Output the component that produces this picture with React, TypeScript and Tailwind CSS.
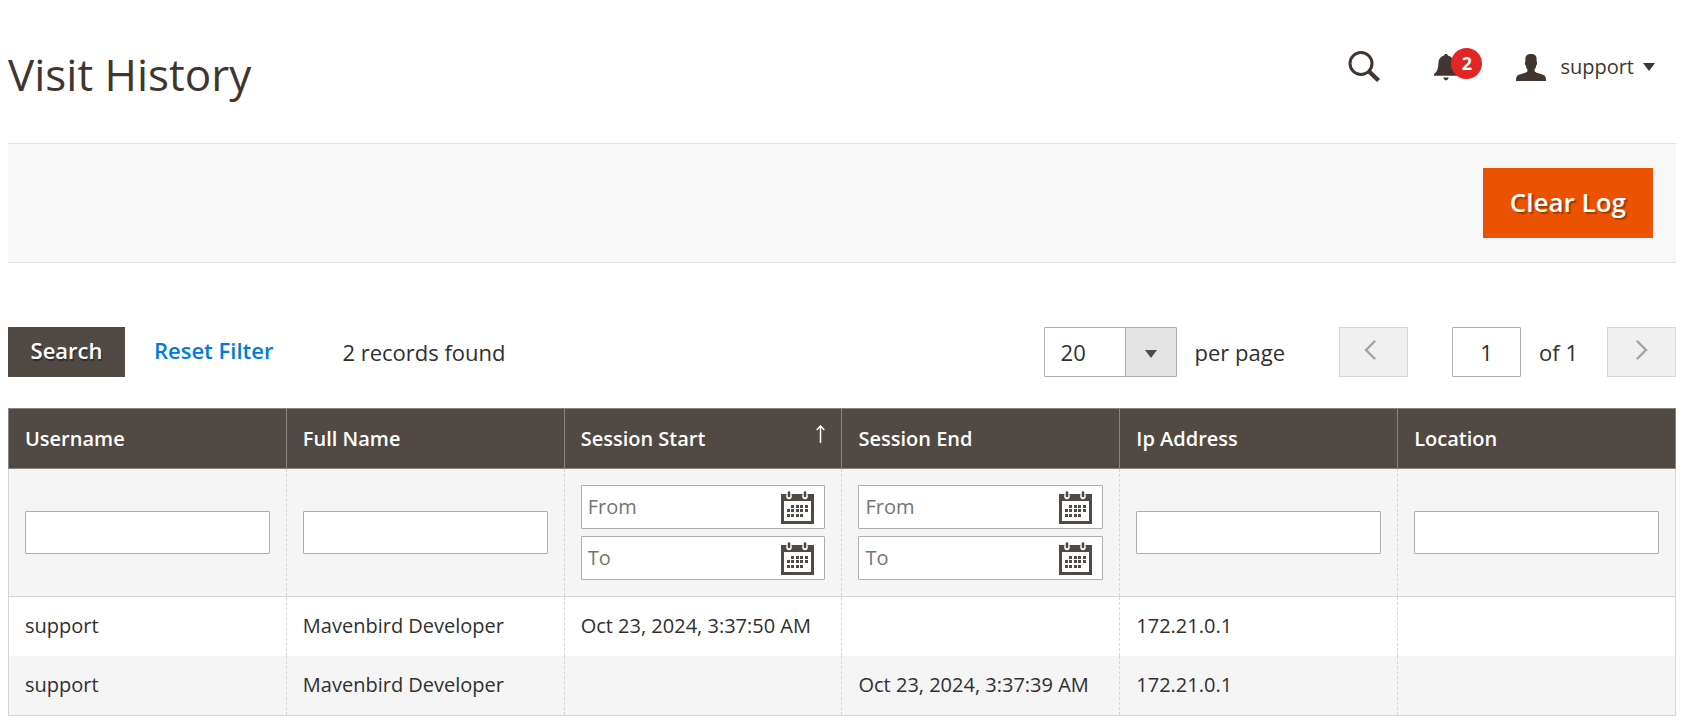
import React from 'react';

const columns = [
  { key: 'username', label: 'Username' },
  { key: 'fullName', label: 'Full Name' },
  { key: 'start', label: 'Session Start', date: true, sorted: true },
  { key: 'end', label: 'Session End', date: true },
  { key: 'ip', label: 'Ip Address' },
  { key: 'location', label: 'Location' },
];

const visits: Record<string, string>[] = [
  { username: 'support', fullName: 'Mavenbird Developer', start: 'Oct 23, 2024, 3:37:50 AM', end: '', ip: '172.21.0.1', location: '' },
  { username: 'support', fullName: 'Mavenbird Developer', start: '', end: 'Oct 23, 2024, 3:37:39 AM', ip: '172.21.0.1', location: '' },
];

const SearchIcon = () => (
  <svg width="32" height="32" viewBox="0 0 32 32" fill="none" stroke="#41362f">
    <circle cx="13" cy="12.5" r="11" strokeWidth="3" />
    <path d="M20.5 20 L30.5 29.5" strokeWidth="4.4" />
  </svg>
);

const BellIcon = () => (
  <svg width="24" height="27" viewBox="0 0 24 27" fill="#41362f">
    <path d="M12 0C13.1 0 13.8.7 13.9 1.6C17.6 2.6 19.4 5.4 19.6 9C19.8 14.5 20.8 18 24 20V21.8H0V20C3.2 18 4.2 14.5 4.4 9C4.6 5.4 6.4 2.6 10.1 1.6C10.2.7 10.9 0 12 0Z" />
    <path d="M9.4 23.6H14.6C14.4 25.4 13.4 26.4 12 26.4C10.6 26.4 9.6 25.4 9.4 23.6Z" />
  </svg>
);

const UserIcon = () => (
  <svg width="30" height="27" viewBox="0 0 30 27" fill="#41362f">
    <path d="M15 0C18.8 0 20.6 1.6 20.6 5V7.6C21.4 8 21.2 11 20.2 11.6C20 13.6 19.2 14.8 18.6 15.6V17.6C20.4 19.4 26.6 20 28.6 21.6C29.6 22.6 30 24.4 30 27H0C0 24.4 .4 22.6 1.4 21.6C3.4 20 9.6 19.4 11.4 17.6V15.6C10.8 14.8 10 13.6 9.8 11.6C8.8 11 8.6 8 9.4 7.6V5C9.4 1.6 11.2 0 15 0Z" />
  </svg>
);

const CaretIcon = ({ className }: { className?: string }) => (
  <svg width="12" height="8" viewBox="0 0 12 8" className={className}>
    <path d="M0 0H12L6 8Z" fill="currentColor" />
  </svg>
);

const ChevronIcon = ({ flip }: { flip?: boolean }) => (
  <svg width="12" height="20" viewBox="0 0 12 20" fill="none" stroke="#a5a2a0" strokeWidth="2.4" strokeLinecap="round">
    <path d={flip ? 'M1.5 1.5 L10 10 L1.5 18.5' : 'M10.5 1.5 L2 10 L10.5 18.5'} />
  </svg>
);

const dots = [
  [10, 14], [15, 14], [19, 14], [24, 14],
  [6, 18], [10, 18], [15, 18], [19, 18], [24, 18],
  [6, 23], [10, 23], [15, 23], [19, 23],
];

const CalendarIcon = () => (
  <svg width="33" height="33" viewBox="0 0 33 33" shapeRendering="crispEdges">
    <path d="M0 3H33V33H0ZM3 10V30H30V10Z" fill="#514943" fillRule="evenodd" />
    {[8, 24].map((x) => (
      <g key={x} shapeRendering="auto" fill="none" strokeLinecap="round">
        <path d={`M${x} 4.5V5.5`} stroke="#fff" strokeWidth="5.5" />
        <path d={`M${x} 1.5V5`} stroke="#514943" strokeWidth="2.6" />
      </g>
    ))}
    {dots.map(([x, y]) => (
      <rect key={`${x}-${y}`} x={x} y={y} width="3" height="3" fill="#514943" />
    ))}
  </svg>
);

const DateField = ({ id, placeholder, label }: { id: string; placeholder: string; label: string }) => (
  <div className="flex h-11 items-center rounded-[1px] border border-[#adadad] bg-white pl-[6px] pr-[10px]">
    <input id={id} aria-label={`${label} ${placeholder}`} placeholder={placeholder} className="w-full min-w-0 flex-1 bg-transparent text-xl outline-none placeholder:text-[#757575]" />
    <button type="button" aria-label={`Pick ${label} ${placeholder}`} className="shrink-0">
      <CalendarIcon />
    </button>
  </div>
);

const App = () => {
  return (
    <main className="bg-white pl-2 pr-[11px] font-['Open_Sans',sans-serif] text-[#303030]">
      <header className="flex h-[143px] items-start justify-between pr-[21px] pt-12">
        <h1 className="text-[44px] leading-[52px] text-[#41362f]">Visit History</h1>
        <div className="flex h-[38px] items-center text-[#41362f]">
          <button type="button" aria-label="Search" className="mr-[54px]">
            <SearchIcon />
          </button>
          <button type="button" aria-label="Notifications" className="relative mr-[58px]">
            <BellIcon />
            <span className="absolute -top-[6px] left-[17px] flex size-[31px] items-center justify-center rounded-full bg-[#e22626] text-lg font-bold text-white">2</span>
          </button>
          <button type="button" className="flex items-center text-xl">
            <UserIcon />
            <span className="ml-[14px] mr-[9px]">support</span>
            <CaretIcon />
          </button>
        </div>
      </header>

      <div className="flex justify-end border-y border-[#e3e3e3] bg-[#f8f8f8] py-6 pr-[23px]">
        <button type="button" className="h-[70px] bg-[#eb5202] px-[27px] pb-[2px] text-[26px] font-semibold text-white [text-shadow:2px_2px_1px_rgba(0,0,0,0.3)]">
          Clear Log
        </button>
      </div>

      <div className="mt-16 flex items-center justify-between text-[22px]">
        <div className="flex items-center">
          <button type="button" className="h-[50px] w-[117px] bg-[#514943] pb-[3px] font-semibold text-white [text-shadow:1px_2px_1px_rgba(0,0,0,0.4)]">
            Search
          </button>
          <button type="button" className="ml-[29px] pb-[3px] font-semibold text-[#007bdb]">Reset Filter</button>
          <span className="ml-[69px]">2 records found</span>
        </div>
        <div className="flex items-center">
          <div className="relative">
            <select id="per-page" defaultValue="20" className="h-[50px] w-[133px] appearance-none rounded-[1px] border border-[#adadad] bg-white pl-4 outline-none">
              <option>20</option>
              <option>30</option>
              <option>50</option>
            </select>
            <span className="pointer-events-none absolute inset-y-px right-px flex w-[51px] items-center justify-center border-l border-[#adadad] bg-[#e3e3e3] text-[#514943]">
              <CaretIcon className="mt-1" />
            </span>
          </div>
          <label htmlFor="per-page" className="ml-[18px]">per page</label>
          <button type="button" aria-label="Previous page" disabled className="ml-[54px] flex h-[50px] w-[69px] items-center justify-center border border-[#d6d6d6] bg-[#f0f0f0] pb-1 pr-2">
            <ChevronIcon />
          </button>
          <input id="page" defaultValue="1" className="ml-11 h-[50px] w-[69px] rounded-[1px] border border-[#adadad] text-center outline-none" />
          <label htmlFor="page" className="ml-[18px]">of 1</label>
          <button type="button" aria-label="Next page" disabled className="ml-[29px] flex h-[50px] w-[69px] items-center justify-center border border-[#d6d6d6] bg-[#f0f0f0] pb-1">
            <ChevronIcon flip />
          </button>
        </div>
      </div>

      <table className="mt-[31px] w-full table-fixed border-collapse border border-[#d6d6d6] text-xl">
        <thead>
          <tr className="h-[60px] bg-[#514943] text-left text-white">
            {columns.map((col) => (
              <th key={col.key} className="border border-[#8a837f] px-4 font-semibold">
                <div className="flex justify-between">
                  {col.label}
                  {col.sorted && (
                    <svg width="9" height="18" viewBox="0 0 9 18" fill="none" stroke="#fff">
                      <path d="M4.5 18V1.5M.7 5L4.5 1L8.3 5" strokeWidth="1.5" />
                    </svg>
                  )}
                </div>
              </th>
            ))}
          </tr>
        </thead>
        <tbody>
          <tr className="h-32 border-b border-[#d6d6d6] bg-[#f5f5f5]">
            {columns.map((col) => (
              <td key={col.key} className="border-r border-dashed border-r-[#d6d6d6] px-4 last:border-solid">
                {col.date ? (
                  <div className="flex flex-col gap-[7px]">
                    <DateField id={`${col.key}-from`} label={col.label} placeholder="From" />
                    <DateField id={`${col.key}-to`} label={col.label} placeholder="To" />
                  </div>
                ) : (
                  <input aria-label={col.label} className="block h-[43px] w-full rounded-[1px] border border-[#adadad] bg-white px-2 outline-none" />
                )}
              </td>
            ))}
          </tr>
          {visits.map((visit, i) => (
            <tr key={i} className="h-[59px] last:h-[60px] even:bg-white odd:bg-[#f5f5f5]">
              {columns.map((col) => (
                <td key={col.key} className="border-r border-dashed border-r-[#d6d6d6] px-4 last:border-solid">
                  {visit[col.key]}
                </td>
              ))}
            </tr>
          ))}
        </tbody>
      </table>
    </main>
  );
};

export default App;
